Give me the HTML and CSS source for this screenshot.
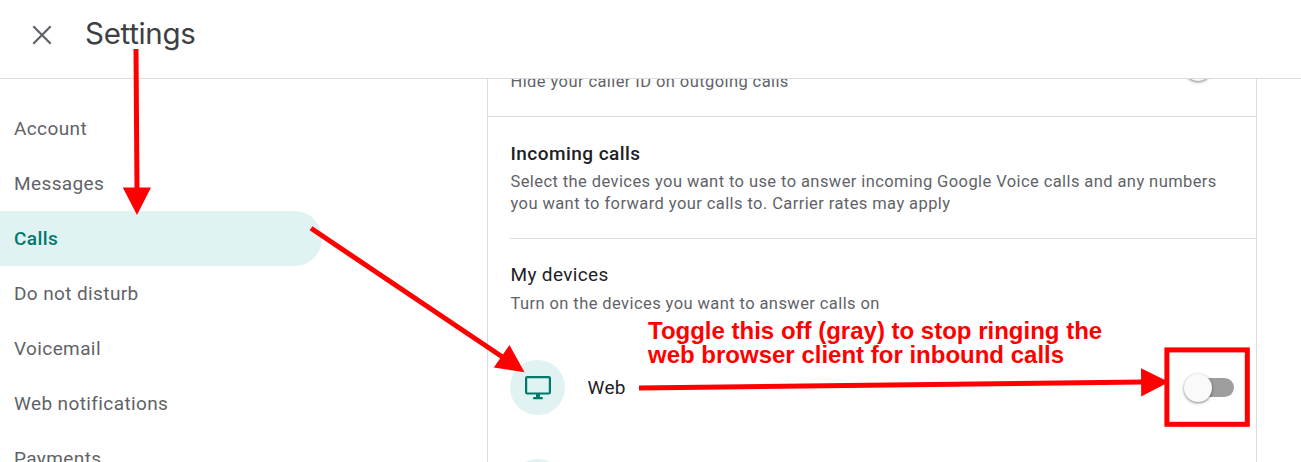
FILE: index.html
```
<!DOCTYPE html>
<html lang="en">
<head>
    <meta charset="UTF-8">
    <meta name="viewport" content="width=device-width, initial-scale=1.0">
    <title>Settings</title>
    <link rel="stylesheet" href="styles.css">
</head>
<body>
    <header class="header">
        <button class="close-button" aria-label="Close">
            <svg width="20" height="20" viewBox="0 0 20 20">
                <path d="M1.3 1.3L18.7 18.7M18.7 1.3L1.3 18.7" />
            </svg>
        </button>
        <h1 class="title">Settings</h1>
    </header>

    <main class="main">
        <nav class="sidebar">
            <a class="nav-item">Account</a>
            <a class="nav-item">Messages</a>
            <a class="nav-item active">Calls</a>
            <a class="nav-item">Do not disturb</a>
            <a class="nav-item">Voicemail</a>
            <a class="nav-item">Web notifications</a>
            <a class="nav-item">Payments</a>
        </nav>

        <div class="panel">
            <!-- Partly scrolled under the header -->
            <section class="caller-id">
                <p class="description">Hide your caller ID on outgoing calls</p>
                <div class="toggle"><span class="knob"></span></div>
            </section>

            <section class="incoming">
                <h2 class="section-title">Incoming calls</h2>
                <p class="description">Select the devices you want to use to answer incoming Google Voice calls and any numbers<br>you want to forward your calls to. Carrier rates may apply</p>
            </section>

            <section class="devices">
                <h3 class="section-subtitle">My devices</h3>
                <p class="description">Turn on the devices you want to answer calls on</p>
                <div class="device">
                    <div class="device-icon">
                        <svg width="26" height="24" viewBox="0 0 26 24">
                            <rect x="1.1" y="1.1" width="23.8" height="16.4" rx="1.2" />
                            <path class="stand" d="M11 18h4v3h2.8v2.2H8.2V21H11z" />
                        </svg>
                    </div>
                    <span class="device-name">Web</span>
                    <div class="toggle"><span class="knob"></span></div>
                </div>
                <div class="device">
                    <div class="device-icon"></div>
                </div>
            </section>
        </div>
    </main>

    <!-- Annotations drawn over the page -->
    <svg class="annotations" width="1301" height="462" viewBox="0 0 1301 462">
        <path class="line" d="M136 49L137 190" />
        <path class="head" d="M122.800 187.600L151 187.400L137 215z" />
        <path class="line" d="M311 228.300L504 358" />
        <path class="head" d="M509.500 345L493.800 367.600L524.500 372.300z" />
        <path class="line" d="M639 388L1143 382" />
        <path class="head" d="M1141 368.300L1141.200 396.500L1169 382z" />
        <rect class="line" x="1166.900" y="349.900" width="80.400" height="74.400" />
    </svg>
    <p class="note">Toggle this off (gray) to stop ringing the<br>web browser client for inbound calls</p>
</body>
</html>
```
FILE: styles.css
```
* {
    box-sizing: border-box;
}

body {
    margin: 0;
    height: 462px;
    display: flex;
    flex-direction: column;
    overflow: hidden;
    position: relative;
    background-color: #fff;
    font-family: Roboto, sans-serif;
    color: #202124;
}

h1, h2, h3, p {
    margin: 0;
    font-weight: 400;
}

.header {
    flex: none;
    height: 79px;
    display: flex;
    align-items: center;
    padding: 0 0 9px 31.5px;
    border-bottom: 1px solid #dadce0;
}

.close-button {
    display: flex;
    padding: 0;
    border: none;
    background: none;
    cursor: pointer;
}

.close-button svg {
    fill: none;
    stroke: #5f6368;
    stroke-width: 2.2;
}

.title {
    margin-left: 33.5px;
    padding-bottom: 3px;
    font-family: Inter, sans-serif;
    font-size: 29.5px;
    line-height: 40px;
    letter-spacing: -0.3px;
    color: #3c4043;
}

.main {
    flex: 1;
    min-height: 0;
    display: flex;
    gap: 165px;
    overflow: hidden;
}

.sidebar {
    width: 322px;
    padding-top: 22px;
}

.nav-item {
    display: flex;
    align-items: center;
    height: 55px;
    padding-left: 14px;
    font-size: 19px;
    letter-spacing: 0.39px;
    color: #5f6368;
}

.nav-item.active {
    border-radius: 0 27.5px 27.5px 0;
    background-color: #e0f2f1;
    font-weight: 500;
    color: #00796b;
}

.panel {
    width: 770px;
    height: 500px;
    border: 1px solid #dadce0;
    border-width: 0 1px;
}

.description {
    padding-left: 0.5px;
    font-size: 16.5px;
    line-height: 22px;
    letter-spacing: 0.41px;
    color: #5f6368;
    white-space: nowrap;
}

.caller-id {
    display: flex;
    justify-content: space-between;
    margin-top: -20px;
    height: 58px;
    padding: 12px 22px 0;
    border-bottom: 1px solid #dadce0;
}

.caller-id .toggle {
    margin-top: -14px;
}

.incoming {
    margin-left: 22px;
    height: 122px;
    padding-top: 23px;
    border-bottom: 1px solid #dadce0;
}

.section-title, .section-subtitle {
    padding-left: 0.5px;
    font-size: 19px;
    line-height: 27px;
    letter-spacing: 0.35px;
}

.section-title {
    margin-bottom: 4px;
    font-weight: 500;
    letter-spacing: 0.45px;
}

.devices {
    padding: 22px 22px 0;
}

.section-subtitle {
    margin-bottom: 5px;
}

.device {
    display: flex;
    align-items: center;
    height: 55px;
    margin: 45px 0 44px;
}

.device + .device {
    margin-top: 0;
}

.device-icon {
    width: 55px;
    height: 55px;
    display: flex;
    align-items: center;
    justify-content: center;
    border-radius: 50%;
    background-color: #e0f2f1;
}

.device-icon svg {
    fill: none;
    stroke: #00796b;
    stroke-width: 2.2;
}

.device-icon .stand {
    fill: #00796b;
    stroke: none;
}

.device-name {
    margin-left: 22.5px;
    font-size: 19px;
    letter-spacing: 0.35px;
}

.toggle {
    position: relative;
    width: 47px;
    height: 19px;
    margin-left: auto;
    border-radius: 10px;
    background-color: #9e9e9e;
}

.knob {
    position: absolute;
    top: -4px;
    left: -3px;
    width: 28px;
    height: 28px;
    border-radius: 50%;
    background-color: #fafafa;
    box-shadow: 0 1px 3px rgba(0, 0, 0, 0.5);
}

.annotations {
    position: absolute;
    top: 0;
    left: 0;
    pointer-events: none;
}

.annotations .line {
    fill: none;
    stroke: #f00;
    stroke-width: 5;
}

.annotations .head {
    fill: #f00;
}

.note {
    position: absolute;
    top: 319px;
    left: 648px;
    font-family: "Liberation Sans", sans-serif;
    font-size: 24px;
    font-weight: bold;
    line-height: 24px;
    color: #f00;
    white-space: nowrap;
}
```
